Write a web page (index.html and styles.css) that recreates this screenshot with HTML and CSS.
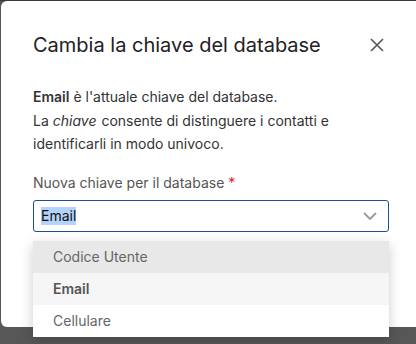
FILE: index.html
```html
<!DOCTYPE html>
<html lang="it">
<head>
    <meta charset="UTF-8">
    <meta name="viewport" content="width=device-width, initial-scale=1.0">
    <title>Cambia la chiave del database</title>
    <link rel="stylesheet" href="styles.css">
</head>
<body>
    <div class="modal">
        <div class="modal-header">
            <h2>Cambia la chiave del database</h2>
            <button class="close-btn" aria-label="Chiudi">
                <svg width="14" height="14" viewBox="0 0 14 14">
                    <path d="M1 1L13 13M13 1L1 13" stroke="#555" stroke-width="1.6" fill="none"/>
                </svg>
            </button>
        </div>

        <p class="intro">
            <b>Email</b> è l'attuale chiave del database.<br>
            La <i>chiave</i> consente di distinguere i contatti e identificarli in modo univoco.
        </p>

        <div class="field">
            <label>Nuova chiave per il database <span class="req">*</span></label>
            <div class="select-wrap">
                <div class="select">
                    <span class="selected-text">Email</span>
                    <svg class="chevron" width="14" height="8" viewBox="0 0 14 8">
                        <path d="M1 1L7 7L13 1" stroke="#999" stroke-width="1.8" fill="none"/>
                    </svg>
                </div>
                <ul class="options">
                    <li class="hover">Codice Utente</li>
                    <li class="active">Email</li>
                    <li>Cellulare</li>
                </ul>
            </div>
        </div>
    </div>
</body>
</html>
```

FILE: styles.css
```css
html, body {
    margin: 0;
    height: 100%;
    overflow: hidden;
}
body {
    background: #575757;
    font-family: Inter, "Noto Sans", sans-serif;
    border-top: 1px solid #3a3a3a;
    box-sizing: border-box;
}
/* the dialog runs on past the right edge of the frame */
.modal {
    height: 326px;
    margin-left: 1px;
    padding: 0 32px;
    background: #fff;
    border-radius: 6px 0 0 6px;
    box-sizing: border-box;
}
.modal-header {
    width: 356px;
    display: flex;
    justify-content: space-between;
    align-items: center;
    padding-top: 30px;
}
h2 {
    margin: 0;
    font-size: 20px;
    font-weight: 400;
    line-height: 28px;
    color: #222;
}
.close-btn {
    border: 0;
    background: none;
    padding: 0;
    margin-right: 5px;
    display: flex;
}
.intro {
    width: 340px;
    margin: 26px 0 0;
    font-size: 14px;
    line-height: 23.5px;
    color: #333;
}
.intro b {
    font-weight: 600;
}
.intro i {
    padding-right: 1px;
}
.field {
    width: 356px;
    margin-top: 17px;
}
label {
    display: block;
    font-size: 14px;
    line-height: 20px;
    color: #555;
}
.req {
    color: #e02424;
}
.select-wrap {
    position: relative;
    margin-top: 7px;
}
.select {
    height: 32px;
    border: 1px solid #1c4f96;
    border-radius: 3px;
    box-sizing: border-box;
    display: flex;
    align-items: center;
    justify-content: space-between;
    padding: 0 11px 0 7px;
    font-size: 14px;
    color: #111;
}
.selected-text {
    background: #b3d3f8;
    line-height: 18px;
}
.options {
    position: absolute;
    top: 41px;
    left: 0;
    width: 100%;
    margin: 0;
    padding: 0;
    list-style: none;
    background: #fff;
    box-shadow: 0 4px 12px rgba(0, 0, 0, 0.2);
}
.options li {
    height: 32px;
    line-height: 32px;
    padding-left: 20px;
    font-size: 14px;
    color: #666;
}
.options li.hover {
    background: #e8e8e8;
}
.options li.active {
    background: #f6f6f6;
    font-weight: 600;
    color: #555;
}
```
